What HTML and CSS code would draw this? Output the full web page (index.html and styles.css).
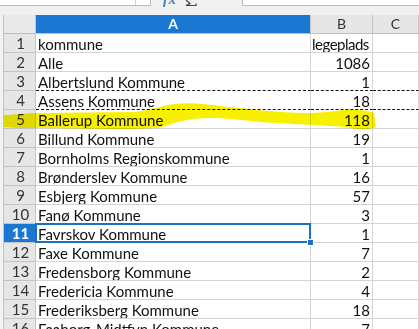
FILE: index.html
```html
<!DOCTYPE html>
<html lang="da">
<head>
<meta charset="utf-8">
<title>Regneark</title>
<link rel="stylesheet" href="styles.css">
</head>
<body>
<div class="app">
  <div class="toolbar">
    <div class="namebox"><span class="drop"></span></div>
    <span class="fx">fx</span>
    <svg class="sigma" width="12" height="6" viewBox="0 0 12 6"><path d="M1 0 L5 3.5 L1 5.5 L11 5.5 L11 3.5" fill="none" stroke="#444" stroke-width="1.2"/></svg>
    <div class="formula"></div>
  </div>
  <div class="sheet">
    <div class="grid">
      <div class="corner"></div>
      <div class="colhead sel">A</div>
      <div class="colhead">B</div>
      <div class="colhead">C</div>

      <div class="rowhead">1</div><div class="cell">kommune</div><div class="cell tight">legeplads</div><div class="cell"></div>
      <div class="rowhead">2</div><div class="cell">Alle</div><div class="cell num">1086</div><div class="cell"></div>
      <div class="rowhead">3</div><div class="cell marq">Albertslund Kommune</div><div class="cell num marq">1</div><div class="cell marq"></div>
      <div class="rowhead">4</div><div class="cell marq">Assens Kommune</div><div class="cell num marq">18</div><div class="cell marq"></div>
      <div class="rowhead">5</div><div class="cell">Ballerup Kommune</div><div class="cell num">118</div><div class="cell"></div>
      <div class="rowhead">6</div><div class="cell">Billund Kommune</div><div class="cell num">19</div><div class="cell"></div>
      <div class="rowhead">7</div><div class="cell">Bornholms Regionskommune</div><div class="cell num">1</div><div class="cell"></div>
      <div class="rowhead">8</div><div class="cell">Brønderslev Kommune</div><div class="cell num">16</div><div class="cell"></div>
      <div class="rowhead">9</div><div class="cell">Esbjerg Kommune</div><div class="cell num">57</div><div class="cell"></div>
      <div class="rowhead">10</div><div class="cell">Fanø Kommune</div><div class="cell num">3</div><div class="cell"></div>
      <div class="rowhead sel">11</div><div class="cell active">Favrskov Kommune<span class="handle"></span></div><div class="cell num">1</div><div class="cell"></div>
      <div class="rowhead">12</div><div class="cell">Faxe Kommune</div><div class="cell num">7</div><div class="cell"></div>
      <div class="rowhead">13</div><div class="cell">Fredensborg Kommune</div><div class="cell num">2</div><div class="cell"></div>
      <div class="rowhead">14</div><div class="cell">Fredericia Kommune</div><div class="cell num">4</div><div class="cell"></div>
      <div class="rowhead">15</div><div class="cell">Frederiksberg Kommune</div><div class="cell num">18</div><div class="cell"></div>
      <div class="rowhead">16</div><div class="cell">Faaborg-Midtfyn Kommune</div><div class="cell num">7</div><div class="cell"></div>
    </div>
  </div>
  <svg class="highlight" width="419" height="329" viewBox="0 0 419 329">
    <path d="M4 115 C20 114 30 113 40 113 L135 112 C150 110 160 106 175 104 C190 102 205 104 220 106 C250 109 280 113 305 113 C320 113 330 112 342 110 C355 109 368 110 374 113 L376 127 C370 130 358 130 345 127 C320 125 290 124 260 122 C240 120 225 118 210 118 C190 118 175 122 162 127 C150 129 130 129 110 129 L40 128 C25 128 12 128 4 127 Z" fill="#f7f000"/>
  </svg>
</div>
</body>
</html>
```
FILE: styles.css
```css
html, body {
  margin: 0;
  padding: 0;
  background: #ffffff;
  overflow: hidden;
}
.app {
  position: relative;
  width: 419px;
  height: 329px;
  overflow: hidden;
  font-family: Lato, "Liberation Sans", sans-serif;
}
.toolbar {
  height: 15px;
  background: #f0f0f0;
  display: flex;
  align-items: flex-start;
  overflow: hidden;
}
.namebox {
  width: 150px;
  height: 5px;
  background: #fff;
  border-bottom: 1px solid #bdbdbd;
  border-right: 1px solid #bdbdbd;
  display: flex;
  justify-content: flex-end;
}
.drop {
  width: 14px;
  height: 5px;
  border-left: 1px solid #d0d0d0;
}
.fx {
  margin-left: 12px;
  margin-top: -8px;
  font: italic 700 14px "Liberation Serif", serif;
  color: #3d7fc4;
  letter-spacing: 1px;
  line-height: 15px;
}
.sigma {
  margin-left: 8px;
}
.formula {
  margin-left: 45px;
  flex: 1;
  height: 5px;
  background: #fff;
  border-left: 1px solid #bdbdbd;
  border-bottom: 1px solid #bdbdbd;
}
.sheet {
  border-left: 3px solid #f2f2f2;
}
.grid {
  display: grid;
  grid-template-columns: 33px 275px 62px 46px;
  grid-auto-rows: 19px;
}
.grid > div {
  box-sizing: border-box;
  border-right: 1px solid #d4d4d4;
  border-bottom: 1px solid #d4d4d4;
  font-size: 15px;
  line-height: 18px;
  color: #111;
  white-space: nowrap;
  overflow: hidden;
  position: relative;
}
.corner {
  background: #e9e9e9;
  border-left: 1px solid #c4c4c4;
  border-right-color: #c4c4c4 !important;
  border-bottom-color: #bdbdbd !important;
}
.colhead {
  background: #e6e6e6;
  text-align: center;
  color: #333 !important;
  border-right-color: #c4c4c4 !important;
  border-bottom-color: #bdbdbd !important;
  font-size: 14px !important;
}
.rowhead {
  background: #e6e6e6;
  text-align: center;
  color: #333 !important;
  border-left: 1px solid #c4c4c4;
  border-right-color: #c4c4c4 !important;
  border-bottom-color: #c4c4c4 !important;
  padding-left: 2px;
}
.colhead.sel, .rowhead.sel {
  background: #1a78d2;
  color: #fff !important;
  font-weight: 700;
}
.cell {
  padding-left: 2px;
  padding-top: 1px;
}
.cell.tight {
  letter-spacing: -0.5px;
  padding-left: 1px;
}
.cell.num {
  text-align: right;
  padding-left: 0;
  padding-right: 2px;
}
.marq {
  border-bottom: 1px dashed #111 !important;
}
.active {
  overflow: visible !important;
  z-index: 2;
}
.active::after {
  content: "";
  position: absolute;
  left: -1px;
  top: -1px;
  right: -1px;
  bottom: -1px;
  border: 2px solid #1a6fc7;
  pointer-events: none;
}
.handle {
  position: absolute;
  right: -4px;
  bottom: -4px;
  width: 5px;
  height: 5px;
  background: #1a6fc7;
  border: 1px solid #fff;
  z-index: 3;
}
.highlight {
  position: absolute;
  left: 0;
  top: 0;
  mix-blend-mode: multiply;
  pointer-events: none;
}
```
